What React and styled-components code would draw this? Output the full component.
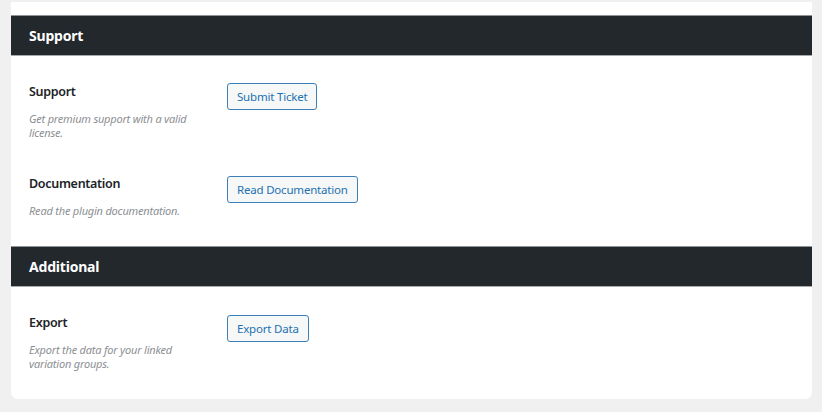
import styled, { createGlobalStyle } from "styled-components";

const GlobalStyle = createGlobalStyle`
  html, body {
    margin: 0;
    padding: 0;
    background: #f0f0f1;
  }
  body {
    font-family: "Noto Sans", "Open Sans", sans-serif;
    color: #1d2327;
  }
`;

const Page = styled.div`
  padding: 2px 10px 14px 11px;
`;

const Card = styled.div`
  background: #fff;
  border-radius: 0 0 7px 7px;
  padding-top: 13px;
  overflow: hidden;
`;

const SectionHeader = styled.h2`
  margin: 0;
  height: 41px;
  box-sizing: border-box;
  display: flex;
  align-items: center;
  padding: 0 18px;
  background: #23282d;
  border-top: 1px solid #8f9499;
  border-bottom: 1px solid #a7aaad;
  color: #fff;
  font-size: 14px;
  font-weight: 700;
  letter-spacing: -0.2px;
`;

const Rows = styled.div`
  padding: 10px 0;
`;

const Row = styled.div`
  display: grid;
  grid-template-columns: 198px auto;
  align-items: start;
  padding: 18px 18px;
`;

const Label = styled.div`
  display: flex;
  flex-direction: column;
  gap: 12px;
`;

const Title = styled.div`
  font-size: 12.5px;
  font-weight: 600;
  line-height: 16px;
  letter-spacing: -0.3px;
  color: #1d2327;
`;

const Desc = styled.p`
  margin: 0;
  max-width: 180px;
  font-size: 11px;
  font-style: italic;
  line-height: 14px;
  letter-spacing: -0.2px;
  color: #8c8f94;
`;

const Button = styled.button`
  justify-self: start;
  height: 27px;
  padding: 0 9px;
  margin-top: ${(p) => p.$offset || 0}px;
  font-family: inherit;
  font-size: 11.5px;
  letter-spacing: -0.2px;
  color: #2271b1;
  background: #f6f7f7;
  border: 1px solid #3f7fb8;
  border-radius: 3px;
  cursor: pointer;
`;

const sections = [
  {
    title: "Support",
    rows: [
      {
        label: "Support",
        desc: "Get premium support with a valid license.",
        button: "Submit Ticket",
        offset: -1,
      },
      {
        label: "Documentation",
        desc: "Read the plugin documentation.",
        button: "Read Documentation",
      },
    ],
  },
  {
    title: "Additional",
    rows: [
      {
        label: "Export",
        desc: "Export the data for your linked variation groups.",
        button: "Export Data",
      },
    ],
  },
];

export default function App() {
  return (
    <>
      <GlobalStyle />
      <Page>
        <Card>
          {sections.map((section) => (
            <section key={section.title}>
              <SectionHeader>{section.title}</SectionHeader>
              <Rows>
                {section.rows.map((row) => (
                  <Row key={row.label}>
                    <Label>
                      <Title>{row.label}</Title>
                      <Desc>{row.desc}</Desc>
                    </Label>
                    <Button $offset={row.offset}>{row.button}</Button>
                  </Row>
                ))}
              </Rows>
            </section>
          ))}
        </Card>
      </Page>
    </>
  );
}
